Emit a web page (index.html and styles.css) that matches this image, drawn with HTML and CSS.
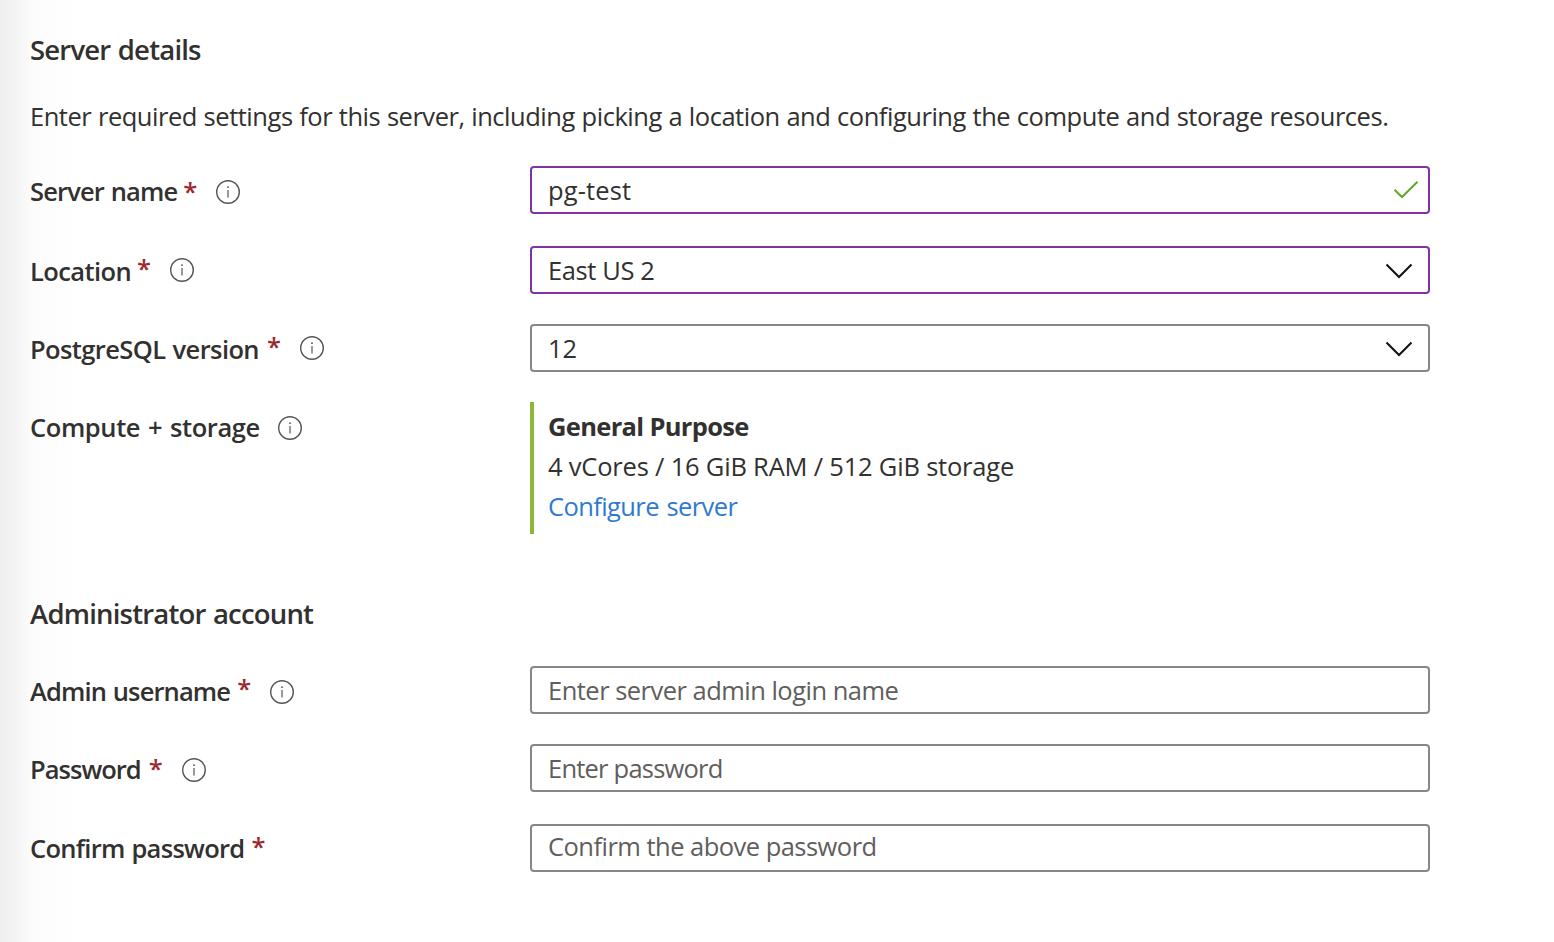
FILE: index.html
```html
<!DOCTYPE html>
<html lang="en">
<head>
<meta charset="utf-8">
<title>Server details</title>
<link rel="stylesheet" href="styles.css">
</head>
<body>
<svg class="defs" width="0" height="0">
  <symbol id="info" viewBox="0 0 26 26"><circle cx="13" cy="13" r="11.3" fill="none" stroke="#555" stroke-width="1.4"/><circle cx="13" cy="8.200" r="0.9" fill="#555"/><path d="M13 11v7.500" stroke="#555" stroke-width="1.2"/></symbol>
  <symbol id="chevron" viewBox="0 0 28 16"><path d="M1.500 1.500L14 14L26.500 1.500" fill="none" stroke="#111" stroke-width="2"/></symbol>
</svg>
<main class="page">
  <h2 class="title">Server details</h2>
  <p class="intro">Enter required settings for this server, including picking a location and configuring the compute and storage resources.</p>
  <section class="server">
    <div class="row name-row">
      <div class="label"><span class="text">Server name</span><span class="star">*</span><svg class="info"><use href="#info"/></svg></div>
      <div class="field active"><span class="value">pg-test</span><svg class="check" viewBox="0 0 26 20"><path d="M1.500 9.800L9 17L24.500 1.800" fill="none" stroke="#63a62c" stroke-width="2"/></svg></div>
    </div>
    <div class="row location-row">
      <div class="label"><span class="text">Location</span><span class="star">*</span><svg class="info"><use href="#info"/></svg></div>
      <div class="field active"><span class="value">East US 2</span><svg class="chevron"><use href="#chevron"/></svg></div>
    </div>
    <div class="row version-row">
      <div class="label"><span class="text">PostgreSQL version</span><span class="star">*</span><svg class="info"><use href="#info"/></svg></div>
      <div class="field"><span class="value">12</span><svg class="chevron"><use href="#chevron"/></svg></div>
    </div>
    <div class="row compute-row">
      <div class="label"><span class="text">Compute + storage</span><svg class="info"><use href="#info"/></svg></div>
      <div class="summary"><strong class="tier">General Purpose</strong><span class="specs">4 vCores / 16 GiB RAM / 512 GiB storage</span><a class="link">Configure server</a></div>
    </div>
  </section>
  <h2 class="title admin">Administrator account</h2>
  <section class="account">
    <div class="row user-row">
      <div class="label"><span class="text">Admin username</span><span class="star">*</span><svg class="info"><use href="#info"/></svg></div>
      <div class="field empty"><span class="value">Enter server admin login name</span></div>
    </div>
    <div class="row password-row">
      <div class="label"><span class="text">Password</span><span class="star">*</span><svg class="info"><use href="#info"/></svg></div>
      <div class="field empty"><span class="value">Enter password</span></div>
    </div>
    <div class="row confirm-row">
      <div class="label"><span class="text">Confirm password</span><span class="star">*</span></div>
      <div class="field empty"><span class="value">Confirm the above password</span></div>
    </div>
  </section>
</main>
</body>
</html>
```
FILE: styles.css
```css
* { box-sizing: border-box; }
body { margin: 0; font-family: "Open Sans", "Noto Sans", sans-serif; font-size: 25.5px; color: #323130; background: #fff; }
.defs { display: block; }
.page { height: 942px; padding: 30px; background: linear-gradient(90deg, #efefef 0, #f4f4f4 15px, #fcfcfc 32px, #fff 76px); white-space: nowrap; }
.title { margin: 0; height: 40px; line-height: 40px; font-size: 27.5px; font-weight: 600; letter-spacing: -0.8px; word-spacing: 1px; }
.intro { margin: 26px 0 0; height: 40px; line-height: 40px; letter-spacing: -0.47px; word-spacing: 0.5px; }
.server { margin-top: 30px; }
.row { display: flex; height: 48px; --star-gap: 6px; --star-y: 0px; --icon-y: 0px; --text-y: 1px; }
.label { width: 500px; display: flex; align-items: center; font-weight: 600; }
.label .text { transform: translateY(var(--text-y)); }
.star { color: #9b2a2e; margin-left: var(--star-gap); transform: translateY(var(--star-y)); }
.info { width: 26px; height: 26px; margin-left: 18px; transform: translateY(var(--icon-y)); }
.field { width: 900px; height: 48px; display: flex; align-items: center; justify-content: space-between; border: 2px solid #878787; border-radius: 4px; padding: 0 15px 0 16px; background: #fff; }
.active { border-color: #8034a4; }
.empty { color: #605e5c; }
.chevron { width: 28px; height: 16px; margin-top: 2px; }
.check { width: 26px; height: 20px; margin-right: -6px; }

.name-row { --star-gap: 6px; --star-y: 1px; --icon-y: 2px; }
.name-row .text { letter-spacing: -0.85px; word-spacing: 1px; }
.name-row .value { letter-spacing: 0.15px; }

.location-row { margin-top: 32px; --star-gap: 6px; --star-y: -2px; }
.location-row .text { letter-spacing: -0.6px; }
.location-row .value { letter-spacing: -0.4px; }

.version-row, .compute-row { margin-top: 30px; }
.version-row { --star-gap: 8px; --star-y: -2px; }
.version-row .text { letter-spacing: -0.6px; word-spacing: 1px; }

.compute-row { height: 132px; --text-y: -1px; }
.compute-row .label { height: 52px; }
.compute-row .text { letter-spacing: -0.4px; word-spacing: 1.6px; }
.compute-row .info { margin-left: 17px; }
.summary { height: 132px; border-left: 4px solid #8cb83a; padding: 4px 14px; display: flex; flex-direction: column; line-height: 40px; }
.tier { letter-spacing: -0.67px; }
.specs { letter-spacing: -0.2px; }
.link { color: #2f7ad1; letter-spacing: -0.6px; word-spacing: 1.6px; }

.admin { margin-top: 60px; }
.account { margin-top: 32px; }

.user-row { --star-gap: 7px; --star-y: -2px; --icon-y: 2px; }
.user-row .text { letter-spacing: -0.87px; word-spacing: 1px; }
.user-row .value { letter-spacing: -0.52px; }

.password-row { margin-top: 30px; --star-gap: 8px; --star-y: 0px; --icon-y: 2px; }
.password-row .text { letter-spacing: -0.97px; }
.password-row .value { letter-spacing: -0.78px; }

.confirm-row { margin-top: 32px; --star-gap: 7px; --star-y: -2px; --text-y: 0px; }
.confirm-row .text { letter-spacing: -0.72px; word-spacing: 1px; }
.confirm-row .value { letter-spacing: -0.53px; margin-top: -4px; }
```
